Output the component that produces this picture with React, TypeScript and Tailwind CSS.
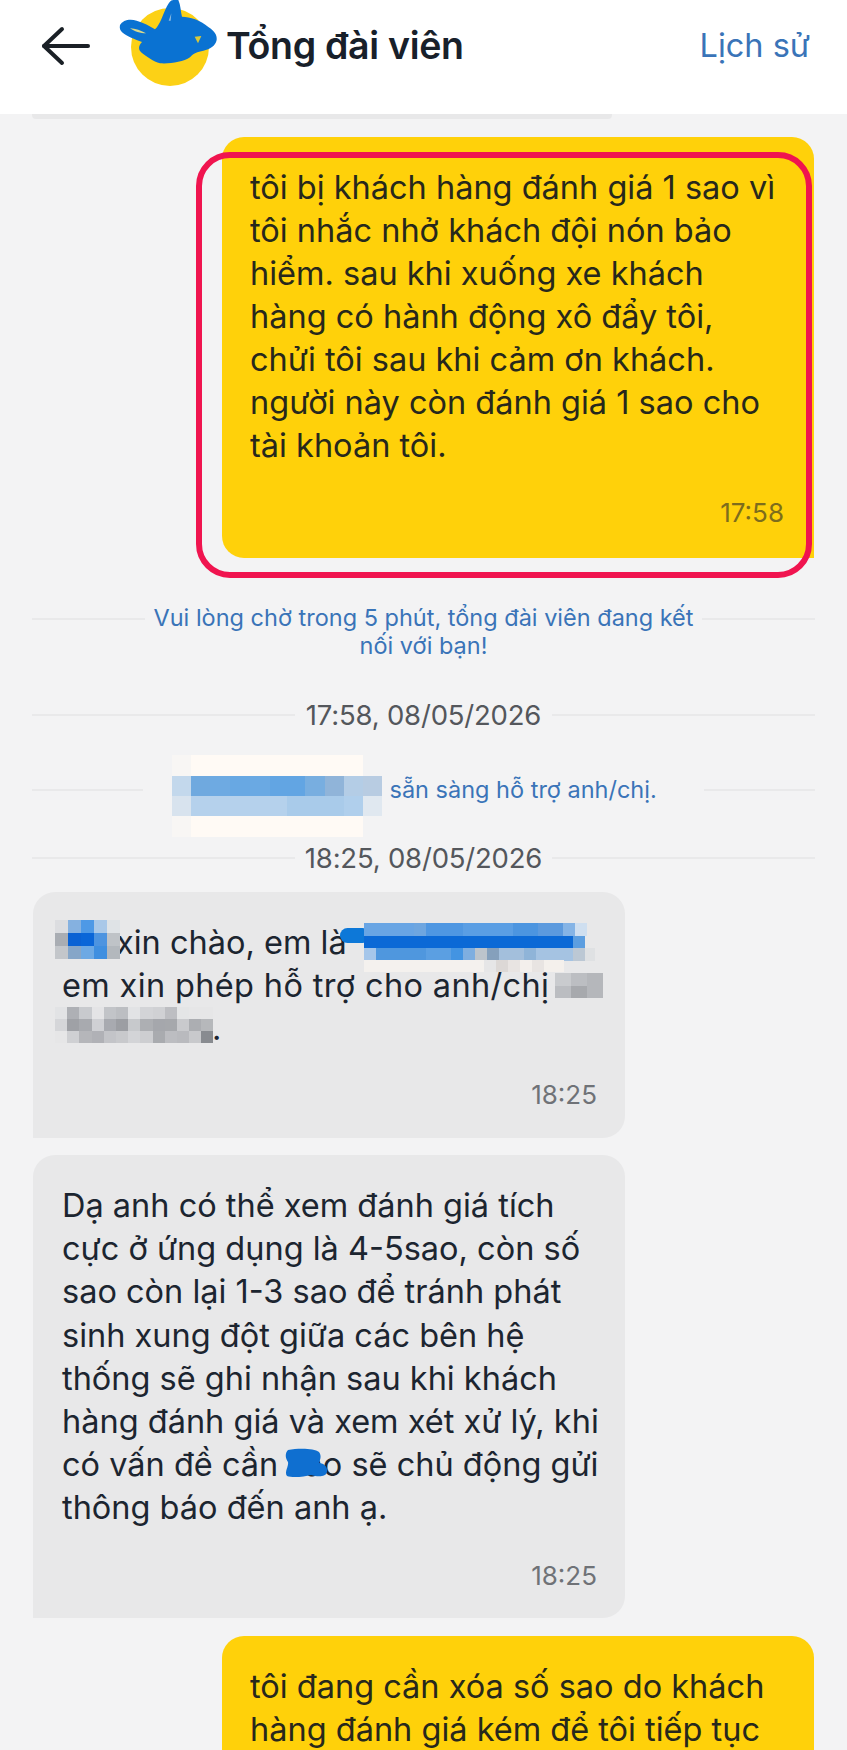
import React from 'react'

const font = "font-['Inter','Noto_Sans',sans-serif]"

// pixelated blocks that hide names in the screenshot
const cream = [
  'left-[172px] top-[755px] w-[19px] h-[82px] bg-[#f8f6f4]',
  'left-[191px] top-[755px] w-[172px] h-[82px] bg-[#fffaf5]',
]

const rowMosaic = [
  ['w-[19px] bg-[#c3d8ec]', 'w-[19px] bg-[#6fa9df]', 'w-[20px] bg-[#6eaae2]', 'w-[20px] bg-[#68a8e3]', 'w-[20px] bg-[#6aa9e3]', 'w-[35px] bg-[#62a5e3]', 'w-[20px] bg-[#78aee0]', 'w-[19px] bg-[#90b4d9]', 'w-[19px] bg-[#b4cde6]', 'w-[19px] bg-[#b8cce2]'],
  ['w-[19px] bg-[#d8e3ee]', 'w-[96px] bg-[#b5d1ec]', 'w-[57px] bg-[#a9cbea]', 'w-[19px] bg-[#b0cfec]', 'w-[19px] bg-[#e0e8f0]'],
]

const helloMosaic = [
  ['bg-[#dcdde0]', 'bg-[#85b1e0]', 'bg-[#4e99e6]', 'bg-[#a9c8e8]', 'bg-[#dfe3e6]'],
  ['bg-[#a9adb3]', 'bg-[#0a62d4]', 'bg-[#0a66d8]', 'bg-[#4d94e0]', 'bg-[#bfc3c7]'],
  ['bg-[#c3c6ca]', 'bg-[#86a6c8]', 'bg-[#6da9e4]', 'bg-[#3f8fe0]', 'bg-[#b3b8bd]'],
]

const nameMosaic = [
  ['w-[50px] bg-[#69a5e4]', 'w-[12px] bg-[#6ea6e0]', 'w-[37px] bg-[#4f97e2]', 'w-[50px] bg-[#5a9ee4]', 'w-[25px] bg-[#4c95e0]', 'w-[25px] bg-[#5c9ade]', 'w-[12px] bg-[#85b4e6]', 'w-[12px] bg-[#cfdff0]'],
  ['w-[209px] bg-[#0b69d6]', 'w-[12px] bg-[#5c9ee0]'],
  ['w-[12px] bg-[#a5c6ea]', 'w-[50px] bg-[#4f97de]', 'w-[25px] bg-[#5b9fe2]', 'w-[12px] bg-[#4394e2]', 'w-[12px] bg-[#7eaee0]', 'w-[12px] bg-[#bcc4cc]', 'w-[12px] bg-[#85a0bc]', 'w-[25px] bg-[#a3bfdc]', 'w-[12px] bg-[#8fb4d8]', 'w-[37px] bg-[#a5c3e2]', 'w-[12px] bg-[#bcc8d4]', 'w-[10px] bg-[#dfe1e3]'],
]

const nameFade = ['w-[120px] bg-[#f4f1ee]', 'w-[12px] bg-[#e6e6e7]', 'w-[12px] bg-[#dcd8d6]', 'w-[12px] bg-[#e8e4e2]', 'w-[12px] bg-[#f3efec]', 'w-[12px] bg-[#e8e4e2]', 'w-[20px] bg-[#f4f0ec]']

const chiMosaic = [
  ['bg-[#c9cbce]', 'bg-[#bcbec2]', 'bg-[#b5b7bb]'],
  ['bg-[#bbbdc1]', 'bg-[#a7a9ad]', 'bg-[#b5b7bb]'],
]

const lineMosaic = [
  ['bg-[#e2e3e5]', 'bg-[#aeb0b5]', 'bg-[#c8cace]', 'bg-[#e4e4e6]', 'bg-[#c2c4c8]', 'bg-[#bcbec2]', 'bg-[#e2e3e5]', 'bg-[#d3d4d7]', 'bg-[#d0d1d4]', 'bg-[#bdbec2]', 'bg-[#e4e5e6]', 'bg-[#e6e6e7]', 'bg-[#e6e6e7]'],
  ['bg-[#d5d6d9]', 'bg-[#9fa1a6]', 'bg-[#a8aaaf]', 'bg-[#cfd0d4]', 'bg-[#a8aab0]', 'bg-[#9c9ea3]', 'bg-[#c7c9cc]', 'bg-[#adafb3]', 'bg-[#a5a7ac]', 'bg-[#a6a8ac]', 'bg-[#c9cacd]', 'bg-[#acaeb2]', 'bg-[#b6b8bb]'],
  ['bg-[#e6e6e7]', 'bg-[#cfd0d3]', 'bg-[#b5b6ba]', 'bg-[#b0b1b6]', 'bg-[#c3c4c8]', 'bg-[#c8c9cc]', 'bg-[#d3d4d7]', 'bg-[#cdced1]', 'bg-[#a9abaf]', 'bg-[#bcbdc1]', 'bg-[#b9babe]', 'bg-[#c8c9cc]', 'bg-[#888b90]'],
]

function Mosaic({ rows, pos, cell, rowH }: { rows: string[][]; pos: string; cell: string; rowH: string }) {
  return (
    <div className={'absolute blur-[0.6px] ' + pos}>
      {rows.map((row, i) => (
        <div key={i} className={'flex ' + rowH}>
          {row.map((c, j) => (
            <div key={j} className={cell + ' ' + c} />
          ))}
        </div>
      ))}
    </div>
  )
}

function Sep({ children, w, mt, start }: { children: React.ReactNode; w: string; mt: string; start?: boolean }) {
  return (
    <div className={'mx-[32px] flex justify-between ' + mt + (start ? ' items-start' : ' items-center')}>
      <div className={'h-[2px] bg-[#e9e9ea] ' + w + (start ? ' mt-[14px]' : '')} />
      {children}
      <div className={'h-[2px] bg-[#e9e9ea] ' + w + (start ? ' mt-[14px]' : '')} />
    </div>
  )
}

function DateRow({ text, mt }: { text: string; mt: string }) {
  return (
    <Sep w="w-[263px]" mt={mt}>
      <span className="text-[27.5px] leading-[30px] text-[#54575c] tracking-[-0.2px]">{text}</span>
    </Sep>
  )
}

export default function App() {
  return (
    <div className={'relative w-[847px] h-[1750px] overflow-hidden bg-[#f3f3f4] ' + font}>
      <header className="relative h-[114px] bg-white flex items-center">
        <svg className="ml-[40px] w-[52px] h-[40px] -mt-[22px]" viewBox="0 0 52 40" fill="none" stroke="#1a2026" strokeWidth="4" strokeLinecap="round" strokeLinejoin="round">
          <path d="M4 20H48" />
          <path d="M22 3L4 20L22 37" />
        </svg>
        <div className="ml-[39px] w-[78px] h-[78px] -mt-[21px] rounded-full bg-[#fcd116]" />
        <h1 className="ml-[17px] -mt-[22px] text-[37.5px] leading-[44px] font-semibold text-[#18202a] tracking-[-0.3px]">Tổng đài viên</h1>
        <a className="ml-auto mr-[37px] -mt-[22px] text-[32.5px] leading-[44px] text-[#3a74b8]">Lịch sử</a>
        <svg className="absolute left-[110px] top-0 w-[120px] h-[95px]" viewBox="0 0 360 285">
          <path fill="#0a72d2" d="M30 75C38 60 60 55 80 62C100 68 120 78 135 88C150 75 158 45 168 25C175 10 182 0 190 0L205 0C212 15 212 35 216 50C240 52 270 58 296 82C312 92 322 105 320 120C316 138 300 148 280 152C262 155 250 160 240 172C220 186 180 192 150 190C130 184 110 170 95 158C85 150 84 138 96 126C75 118 50 108 38 98C30 92 28 84 30 75Z" />
          <path fill="#dcd98a" d="M60 85C75 86 95 92 108 100C92 100 72 94 60 85Z" />
          <path fill="#8cbbe0" d="M176 62L184 40L182 62Z" />
          <path fill="#d8c93a" d="M254 110L274 108L264 130Z" />
        </svg>
      </header>

      <div className="ml-[32px] w-[580px] h-[5px] rounded-b-[4px] bg-[#e8e8e9]" />

      <div className="mt-[18px] ml-[222px] w-[592px] h-[421px] rounded-t-[22px] rounded-bl-[22px] bg-[#ffd10a] pl-[28px] pt-[29px] pr-[30px]">
        <p className="text-[32.5px] leading-[43px] text-[#27281c] h-[301px] whitespace-nowrap">
          tôi bị khách hàng đánh giá 1 sao vì<br />
          tôi nhắc nhở khách đội nón bảo<br />
          hiểm. sau khi xuống xe khách<br />
          hàng có hành động xô đẩy tôi,<br />
          chửi tôi sau khi cảm ơn khách.<br />
          người này còn đánh giá 1 sao cho<br />
          tài khoản tôi.
        </p>
        <p className="mt-[31px] text-right text-[26px] leading-[30px] text-[#7d6d1c]">17:58</p>
      </div>

      <div className="mt-[46px]">
        <Sep w="w-[113px]" mt="" start>
          <p className="text-center text-[23.5px] leading-[28px] text-[#3a74b8]">
            Vui lòng chờ trong 5 phút, tổng đài viên đang kết<br />nối với bạn!
          </p>
        </Sep>
      </div>

      <DateRow text="17:58, 08/05/2026" mt="mt-[40px]" />

      <Sep w="w-[111px]" mt="mt-[46px]">
        <span className="ml-[246px] w-[314px] whitespace-nowrap text-[23.5px] leading-[28px] text-[#3a74b8]">sẵn sàng hỗ trợ anh/chị.</span>
      </Sep>

      <DateRow text="18:25, 08/05/2026" mt="mt-[39px]" />

      <div className="mt-[19px] ml-[33px] w-[592px] h-[246px] rounded-t-[22px] rounded-br-[22px] bg-[#e8e8e9] pl-[29px] pt-[29px] pr-[28px]">
        <p className="text-[32.5px] leading-[43px] text-[#1c2530] h-[129px] whitespace-nowrap">
          <span className="ml-[54px]">xin chào, em là</span><br />
          <span className="tracking-[0.35px]">em xin phép hỗ trợ cho anh/chị</span><br />
          <span className="ml-[150px]">.</span>
        </p>
        <p className="mt-[30px] text-right text-[26px] leading-[30px] text-[#6f7277]">18:25</p>
      </div>

      <div className="mt-[17px] ml-[33px] w-[592px] h-[463px] rounded-t-[22px] rounded-br-[22px] bg-[#e8e8e9] pl-[29px] pt-[29px] pr-[28px]">
        <p className="text-[32.5px] leading-[43.2px] text-[#1c2530] h-[346px] whitespace-nowrap">
          Dạ anh có thể xem đánh giá tích<br />
          cực ở ứng dụng là 4-5sao, còn số<br />
          sao còn lại 1-3 sao để tránh phát<br />
          sinh xung đột giữa các bên hệ<br />
          thống sẽ ghi nhận sau khi khách<br />
          hàng đánh giá và xem xét xử lý, khi<br />
          có vấn đề cần{' '}
          <span className="relative">
            sao
            <svg className="absolute left-[-3px] top-[3px] w-[44px] h-[30px]" viewBox="0 0 44 30">
              <path fill="#0f6fd0" d="M4 2C14 0 30 0 35 4C38 8 36 12 35 15C40 15 44 19 43 24C42 29 34 29 27 27C20 29 8 30 3 28C0 24 5 18 4 14C1 10 1 5 4 2Z" />
            </svg>
          </span>{' '}
          sẽ chủ động gửi<br />
          thông báo đến anh ạ.
        </p>
        <p className="mt-[31px] text-right text-[26px] leading-[30px] text-[#6f7277]">18:25</p>
      </div>

      <div className="mt-[18px] ml-[222px] w-[592px] h-[200px] rounded-t-[22px] bg-[#ffd10a] pl-[28px] pt-[29px]">
        <p className="text-[32.5px] leading-[43px] text-[#27281c] whitespace-nowrap">
          tôi đang cần xóa số sao do khách<br />
          hàng đánh giá kém để tôi tiếp tục
        </p>
      </div>

      {/* red marker around first message */}
      <div className="absolute left-[196px] top-[152px] w-[616px] h-[426px] rounded-[34px] border-[6px] border-[#f0144f]" />

      {cream.map((c, i) => (
        <div key={i} className={'absolute ' + c} />
      ))}
      <Mosaic rows={rowMosaic} pos="left-[172px] top-[776px]" cell="" rowH="h-[20px]" />
      <Mosaic rows={helloMosaic} pos="left-[55px] top-[920px]" cell="w-[13px]" rowH="h-[13px]" />
      <div className="absolute left-[340px] top-[928px] w-[30px] h-[15px] rounded-full bg-[#0d78d8]" />
      <Mosaic rows={nameMosaic} pos="left-[364px] top-[923px]" cell="" rowH="h-[12.5px]" />
      <Mosaic rows={[nameFade]} pos="left-[364px] top-[960px]" cell="" rowH="h-[12px]" />
      <Mosaic rows={chiMosaic} pos="left-[555px] top-[973px]" cell="w-[16px]" rowH="h-[12.5px]" />
      <Mosaic rows={lineMosaic} pos="left-[55px] top-[1007px]" cell="w-[12.2px]" rowH="h-[12px]" />
    </div>
  )
}
